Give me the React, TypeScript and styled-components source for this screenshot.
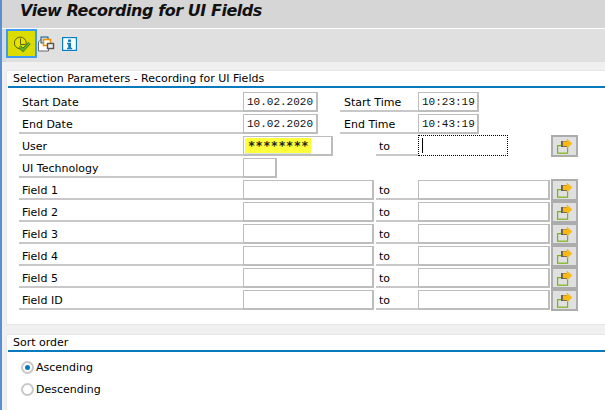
import { FC } from 'react';
import styled, { createGlobalStyle } from 'styled-components';

const GlobalStyle = createGlobalStyle`
  html, body {
    margin: 0;
    padding: 0;
    overflow: hidden;
    background: #f0f0f0;
  }
  * {
    box-sizing: border-box;
  }
`;

const fieldRows = ['Field 1', 'Field 2', 'Field 3', 'Field 4', 'Field 5', 'Field ID'];

const MultiSelectIcon: FC = () => (
  <svg width="16" height="15" viewBox="0 0 16 15">
    <rect x="0.6" y="6.6" width="10" height="7.6" fill="none" stroke="#78b414" strokeWidth="1.2" />
    <path d="M4 2h6v6H4z" fill="#5f5f5f" />
    <path d="M6 2.5h4V0l5 4.5L10 9V7H6z" fill="#fdb913" stroke="#f0a800" strokeWidth="0.4" />
  </svg>
);

const ExecuteIcon: FC = () => (
  <svg width="18" height="18" viewBox="0 0 18 18">
    <circle cx="7.3" cy="8" r="5.9" fill="#e4e400" stroke="#5f5f00" strokeWidth="1" />
    <path d="M7.5 3.5v6h4.5" fill="none" stroke="#5f5f00" strokeWidth="1" />
    <path d="M6.5 11.5l3.5 3.5 6.5-7" fill="none" stroke="#3f7a14" strokeWidth="3.2" />
    <path d="M6.5 11.5l3.5 3.5 6.5-7" fill="none" stroke="#6db52a" strokeWidth="1.8" />
  </svg>
);

const VariantIcon: FC = () => (
  <svg width="17" height="16" viewBox="0 0 17 16">
    <path d="M0.5 6l3-3h7v12h-10z" fill="#fff" stroke="#666" />
    <rect x="3" y="1" width="7" height="6" fill="#cfe0ee" stroke="#0a5a8c" />
    <rect x="5.5" y="3.5" width="7" height="6" fill="#fff" stroke="#f29100" strokeWidth="1.6" />
    <rect x="9.5" y="7.5" width="6" height="5" fill="#eee" stroke="#555" strokeWidth="1.4" />
  </svg>
);

const InfoIcon: FC = () => (
  <svg width="15" height="14" viewBox="0 0 15 14">
    <rect x="0.6" y="0.6" width="13.8" height="12.8" fill="#fff" stroke="#0a7fc4" strokeWidth="1.2" />
    <rect x="6" y="2.5" width="3" height="2.4" fill="#0a7fc4" />
    <path d="M5 5.8h4v5h1.2v1.4H5v-1.4h1.2V7.2H5z" fill="#0a7fc4" />
  </svg>
);

const Page = styled.div`
  width: 605px;
  height: 410px;
  display: flex;
  flex-direction: column;
  border-left: 2px solid #5a8fd0;
  background: #f0f0f0;
  font-family: 'DejaVu Sans', sans-serif;
  font-size: 11px;
  color: #000;
  overflow: hidden;
`;

const TitleBar = styled.h1`
  flex-shrink: 0;
  height: 28px;
  margin: 0;
  padding: 0 0 0 18px;
  background: #d6d6d6;
  border-bottom: 1px solid #fff;
  box-sizing: content-box;
  font-size: 16px;
  line-height: 22px;
  font-weight: bold;
  font-style: italic;
  letter-spacing: -0.45px;
  color: #111;
`;

const Toolbar = styled.div`
  flex-shrink: 0;
  height: 33px;
  background: #e0e0e0;
  border-left: 4px solid #d4dae2;
  display: flex;
  align-items: flex-start;
`;

const ActiveTool = styled.div`
  width: 31px;
  height: 29px;
  display: flex;
  align-items: center;
  justify-content: center;
  background: #dcdc00;
  border: 2px solid #3d9bf0;
`;

const ToolButton = styled.div<{ $gap: number }>`
  height: 29px;
  margin-left: ${(p) => p.$gap}px;
  display: flex;
  align-items: center;
`;

const Content = styled.div`
  flex: 1;
  padding: 8px 0 0 4px;
  display: flex;
  flex-direction: column;
  gap: 9px;
`;

const Panel = styled.section<{ $height: number }>`
  flex-shrink: 0;
  height: ${(p) => p.$height}px;
  background: #fff;
  border: 1px solid #e6e6e6;
  border-right: none;
  padding-left: 1px;
`;

const PanelTitle = styled.div`
  height: 15px;
  padding-left: 5px;
  line-height: 16px;
  border-bottom: 2px solid #0a7abf;
  box-sizing: content-box;
`;

const Rows = styled.div`
  padding: 4px 0 0 11px;
  display: flex;
  flex-direction: column;
  gap: 2px;
`;

const Row = styled.div`
  height: 20px;
  display: flex;
  align-items: flex-start;
`;

const Label = styled.div<{ $width: number; $gap?: number; $inset?: number }>`
  width: ${(p) => p.$width}px;
  height: 20px;
  margin-left: ${(p) => p.$gap ?? 0}px;
  padding-left: ${(p) => p.$inset ?? 3}px;
  line-height: 21px;
  border-bottom: 2px solid #c8c8c8;
`;

const Input = styled.div<{ $width: number }>`
  width: ${(p) => p.$width}px;
  height: 20px;
  padding-left: 3px;
  border: 1px solid #bdbdbd;
  border-width: 1px 2px 2px 1px;
  background: #fff;
  font-family: 'Liberation Mono', monospace;
  font-size: 11px;
  line-height: 19px;
  color: #111;
`;

const FocusedInput = styled.div<{ $width: number }>`
  width: ${(p) => p.$width}px;
  height: 21px;
  margin-top: -1px;
  padding-left: 3px;
  border: 1px dotted #000;
`;

const Masked = styled.span`
  display: block;
  width: 66px;
  height: 16px;
  margin: 1px 0 0 -2px;
  padding-left: 3px;
  background: #ffff3c;
  border-bottom: 1px solid #d8e4ea;
  font-family: 'DejaVu Sans Mono', monospace;
  font-size: 12px;
  font-weight: bold;
  line-height: 16px;
  letter-spacing: 0.4px;
  color: #222;
`;

const Cursor = styled.span`
  display: block;
  width: 1px;
  height: 15px;
  margin-top: 2px;
  background: #000;
`;

const PickButton = styled.div<{ $gap: number }>`
  width: 27px;
  height: 22px;
  margin: -1px 0 0 ${(p) => p.$gap}px;
  display: flex;
  align-items: center;
  justify-content: center;
  background: #e0e0e0;
  border: 2px solid #acacac;
`;

const RadioGroup = styled.div`
  padding: 7px 0 0 13px;
  display: flex;
  flex-direction: column;
  gap: 6px;
`;

const RadioRow = styled.div`
  height: 16px;
  display: flex;
  align-items: center;
  gap: 2px;
`;

const RadioMark = styled.span<{ $checked?: boolean }>`
  width: 13px;
  height: 13px;
  border-radius: 50%;
  border: 2px solid #c8c8c8;
  background: #fff;
  display: flex;
  align-items: center;
  justify-content: center;

  &::after {
    content: '';
    width: 5px;
    height: 5px;
    border-radius: 50%;
    background: ${(p) => (p.$checked ? '#0a7abf' : 'transparent')};
  }
`;

const App: FC = () => (
  <Page>
    <GlobalStyle />
    <TitleBar>View Recording for UI Fields</TitleBar>
    <Toolbar>
      <ActiveTool>
        <ExecuteIcon />
      </ActiveTool>
      <ToolButton $gap={1}>
        <VariantIcon />
      </ToolButton>
      <ToolButton $gap={7}>
        <InfoIcon />
      </ToolButton>
    </Toolbar>
    <Content>
      <Panel $height={255}>
        <PanelTitle>Selection Parameters - Recording for UI Fields</PanelTitle>
        <Rows>
          <Row>
            <Label $width={224}>Start Date</Label>
            <Input $width={75}>10.02.2020</Input>
            <Label $width={78} $gap={22} $inset={4}>Start Time</Label>
            <Input $width={61}>10:23:19</Input>
          </Row>
          <Row>
            <Label $width={224}>End Date</Label>
            <Input $width={75}>10.02.2020</Input>
            <Label $width={78} $gap={22} $inset={4}>End Time</Label>
            <Input $width={61}>10:43:19</Input>
          </Row>
          <Row>
            <Label $width={224}>User</Label>
            <Input $width={90}>
              <Masked>********</Masked>
            </Input>
            <Label $width={42} $gap={43}>to</Label>
            <FocusedInput $width={90}>
              <Cursor />
            </FocusedInput>
            <PickButton $gap={43}>
              <MultiSelectIcon />
            </PickButton>
          </Row>
          <Row>
            <Label $width={224}>UI Technology</Label>
            <Input $width={34} />
          </Row>
          {fieldRows.map((field) => (
            <Row key={field}>
              <Label $width={224}>{field}</Label>
              <Input $width={131} />
              <Label $width={42} $gap={2}>to</Label>
              <Input $width={132} />
              <PickButton $gap={1}>
                <MultiSelectIcon />
              </PickButton>
            </Row>
          ))}
        </Rows>
      </Panel>
      <Panel $height={80}>
        <PanelTitle>Sort order</PanelTitle>
        <RadioGroup>
          <RadioRow>
            <RadioMark $checked />
            Ascending
          </RadioRow>
          <RadioRow>
            <RadioMark />
            Descending
          </RadioRow>
        </RadioGroup>
      </Panel>
    </Content>
  </Page>
);

export default App;
